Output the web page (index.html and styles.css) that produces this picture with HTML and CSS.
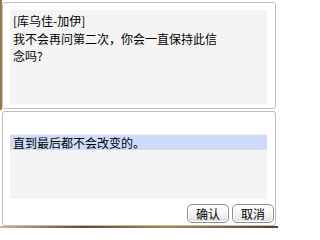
FILE: index.html
```html
<!DOCTYPE html>
<html lang="zh-CN">
<head>
<meta charset="utf-8">
<link rel="stylesheet" href="styles.css">
</head>
<body>
<div class="window">
  <div class="top-row">
    <div class="panel top-panel">
      <div class="message">
        <div class="speaker">[库乌佳-加伊]</div>
        <div class="question">我不会再问第二次，你会一直保持此信念吗?</div>
      </div>
    </div>
  </div>
  <div class="panel bottom-panel">
    <div class="answers">
      <div class="answer selected">直到最后都不会改变的。</div>
    </div>
    <div class="buttons">
      <button class="btn">确认</button>
      <button class="btn">取消</button>
    </div>
  </div>
  <div class="ground"></div>
</div>
</body>
</html>
```

FILE: styles.css
```css
* { box-sizing: border-box; }
html, body {
  margin: 0;
  padding: 0;
  width: 278px;
  height: 228px;
  overflow: hidden;
  background: #ffffff;
  font-family: "Noto Sans CJK SC", "Liberation Sans", sans-serif;
  font-size: 12px;
  color: #000;
}
.window {
  width: 278px;
  height: 228px;
  display: flex;
  flex-direction: column;
}
.top-row {
  padding: 2px 2px 1px 2px;
  background: linear-gradient(to right, #8c6c3c 0, #a88a58 2px, #ffffff 2px);
}
.panel {
  border: 1px solid #bdbdbd;
  border-radius: 3px;
  background: #ffffff;
}
.top-panel {
  width: 274px;
  height: 107px;
  padding: 7px 8px 4px 7px;
}
.message {
  height: 94px;
  background: #f4f4f4;
  padding: 2px 0 0 3px;
  line-height: 17px;
}
.speaker {
  margin-bottom: 1px;
}
.question {
  width: 210px;
}
.bottom-panel {
  margin: 1px 2px 0 2px;
  width: 274px;
  height: 115px;
  padding: 22px 8px 0 7px;
  display: flex;
  flex-direction: column;
}
.answers {
  height: 65px;
  background: #f4f4f4;
  padding-top: 1px;
}
.answer {
  height: 15px;
  line-height: 15px;
  padding-left: 3px;
}
.answer.selected {
  background: #cddcf8;
}
.buttons {
  display: flex;
  justify-content: flex-end;
  gap: 3px;
  margin-top: 5px;
  margin-right: -7px;
}
.btn {
  font-family: "Noto Sans CJK SC", "Liberation Sans", sans-serif;
  font-size: 12px;
  width: 42px;
  height: 19px;
  padding: 0;
  line-height: 17px;
  border: 1px solid #8e8e8e;
  border-radius: 5px;
  background: linear-gradient(to bottom, #ffffff 0%, #f2f2f2 60%, #dcdcdc 100%);
  box-shadow: inset 0 0 0 1px #ffffff;
  color: #000;
}
.ground {
  flex: 1;
  background: linear-gradient(to right, #c8b890, #6a4a20 30%, #a88850 60%, #5a4020);
}
```
